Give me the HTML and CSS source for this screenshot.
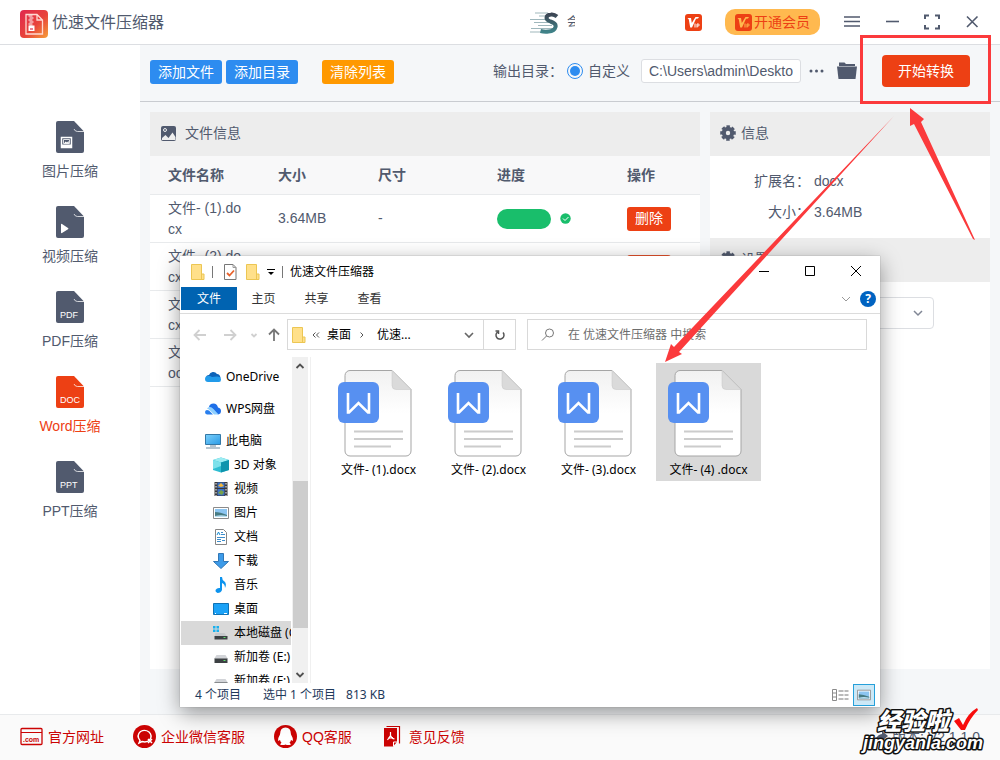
FILE: index.html
```html
<!DOCTYPE html>
<html lang="zh-CN">
<head>
<meta charset="utf-8">
<meta name="viewport" content="width=device-width, initial-scale=1">
<title>优速文件压缩器</title>
<link rel="stylesheet" href="styles.css">
</head>
<body>
<svg class="defs" width="0" height="0" aria-hidden="true">
  <defs>
    <linearGradient id="logo-bg" x1="0" y1="0" x2="1" y2="1"><stop offset="0" stop-color="#e0284f"/><stop offset=".55" stop-color="#e8433b"/><stop offset="1" stop-color="#f6a03a"/></linearGradient>
    <linearGradient id="paper" x1="0" y1="0" x2="0" y2="1"><stop offset="0" stop-color="#f1f1f1"/><stop offset=".5" stop-color="#fff"/></linearGradient>
    <linearGradient id="swoosh" x1="0" y1="0" x2="0" y2="1"><stop offset="0" stop-color="#3c4654"/><stop offset="1" stop-color="#3f8288"/></linearGradient>
    <linearGradient id="screen" x1="0" y1="0" x2="1" y2="1"><stop offset="0" stop-color="#7cd0fb"/><stop offset="1" stop-color="#2a9be6"/></linearGradient>
  </defs>
  <symbol id="vip" viewBox="0 0 17 17"><rect width="17" height="17" rx="3" fill="#ed4014"/><path d="M2.500 4H6l.8 5L10.500 3H14l-1 1.600-2 .2-4 8.700H5.200L3.800 5.400z" fill="currentColor"/><path d="M10 9.500v4M12 13.500v-3.500h1.200q1 0 1 1t-1 1H12" fill="none" stroke="currentColor" stroke-width="1"/></symbol>
  <symbol id="page" viewBox="0 0 28 32"><path d="M2 0h16l10 10.500V30a2 2 0 0 1-2 2H2a2 2 0 0 1-2-2V2a2 2 0 0 1 2-2z" fill="currentColor"/><path d="M18 8q1 2.500 3.500 2.500H28" fill="none" stroke="#fff" stroke-opacity=".75"/></symbol>
  <symbol id="gear" viewBox="0 0 16 16"><g fill="none" stroke="currentColor"><circle cx="8" cy="8" r="4.200" stroke-width="4"/><circle cx="8" cy="8" r="6.600" stroke-width="2.400" stroke-dasharray="3.400 1.784" transform="rotate(-15 8 8)"/></g></symbol>
  <symbol id="folder" viewBox="0 0 14 16"><path d="M.5.5h10v9.500h2.500v5.500H.5z" fill="#ffe08a" stroke="#ecc653"/><path d="M10.500 10v5.500" stroke="#ecc653"/></symbol>
  <symbol id="drive" viewBox="0 0 16 16"><path d="M3.500 6h9L15 10H1z" fill="#d2d4d8"/><path d="M1.500 9.500h13V14h-13z" fill="#3c4043"/><path d="M10.500 11.500h2" stroke="#5be36a"/></symbol>
  <symbol id="picture" viewBox="0 0 16 16"><path d="M.5 2.500h15v11H.5z" fill="#fff" stroke="#8b8b8b"/><path d="M2 4h12v8H2z" fill="#8cc5f1"/><path d="M2 7q5 0 12 3v2H2z" fill="#477b83"/><path d="M2 11q6-1.500 12 0v1H2z" fill="#b8dff2"/></symbol>
  <symbol id="wps-doc" viewBox="0 0 76 90">
    <path d="M12 1.500h42l19 19V82a5 5 0 0 1-5 5H12a5 5 0 0 1-5-5V6.500a5 5 0 0 1 5-5z" fill="url(#paper)" stroke="#a5a5a5"/>
    <path d="M54 1.500l19 19H58a4 4 0 0 1-4-4z" fill="#dadada" stroke="#c4c4c4" stroke-width=".5"/>
    <rect y="13" width="41" height="41" rx="6" fill="#5790f1"/>
    <path d="M10 24v19.500h1l9.500-9.500 9.500 9.500h1V24" fill="none" stroke="#fff" stroke-width="2.600"/>
    <path d="M16 62.500h49M16 70h49M16 77.500h37" stroke="#ccc" stroke-width="2"/>
  </symbol>
</svg>

<header class="topbar">
  <svg class="logo" viewBox="0 0 28 28" aria-hidden="true"><rect width="28" height="28" rx="4" fill="url(#logo-bg)"/><path d="M6 4.500h11l5.500 5.500v14H6zM17 4.500V10h5.500" fill="none" stroke="#ffd9d2" stroke-width="1.300"/><path d="M8.500 6h4m-3 2h4m-5 2h4m-3 2h4m-5 2h4m-3 2h3" stroke="#fff" stroke-width="1.200"/><path d="M8.500 15.500h6V21h-6z" fill="#fff"/><path d="M10 19h3" stroke="#e0304b" stroke-width="1.200"/></svg>
  <h1 class="app-title">优速文件压缩器</h1>
  <div class="account">
    <svg class="avatar" viewBox="0 0 30 24" aria-hidden="true"><path d="M5 3h13M9 6h9M0 9.500h17M4 12.500h15M8 15.500h14M1 18.500h22M0 22h21" stroke="#9fb7bc" stroke-width="1.200"/><path d="M27 6.500Q24 4 21 4.500q-4.500.5-4.500 3.500 0 2 4 3.500 6 2 5 5.500-1 4-7 4.500-4 .5-8-.5" fill="none" stroke="url(#swoosh)" stroke-width="4"/></svg>
    <span class="user-name">会</span>
  </div>
  <svg class="vip vip-badge" aria-hidden="true"><use href="#vip"/></svg>
  <button class="vip-button" type="button"><svg class="vip vip-amber" aria-hidden="true"><use href="#vip"/></svg>开通会员</button>
  <div class="window-tools">
    <button type="button" aria-label="菜单"><svg viewBox="0 0 16 16"><path d="M0 3h16M0 7.500h16M0 12h16"/></svg></button>
    <button type="button" aria-label="最小化"><svg viewBox="0 0 16 16"><path d="M2 7.500h13"/></svg></button>
    <button type="button" aria-label="全屏"><svg viewBox="0 0 16 16"><path d="M1 5V1.500h4M11 1.500h4V5M15 11v3.500h-4M5 14.500H1V11" stroke-width="2"/></svg></button>
    <button type="button" aria-label="关闭"><svg viewBox="0 0 16 16"><path d="M3 2.500L13.500 13M13.500 2.500L3 13"/></svg></button>
  </div>
</header>

<div class="workspace">
  <nav class="side">
    <button class="side-item" type="button"><span class="page-icon"><svg aria-hidden="true"><use href="#page"/><path d="M5.500 16.500h10v10h-10z" fill="#515a6e" stroke="#fff" stroke-width="1.500"/><path d="M6 23.500h9v3H6z" fill="#fff"/><path d="M7.500 18.500h6v4h-6z" fill="none" stroke="#fff" stroke-width=".8"/><path d="M8 22.500l1.500-2 1.500 1 1.500-1.500.5 2.500z" fill="#fff"/></svg></span>图片压缩</button>
    <button class="side-item" type="button"><span class="page-icon"><svg aria-hidden="true"><use href="#page"/><path d="M5 18.500q0-1 1-.5l6 4q1 .7 0 1.200l-6 3.800q-1 .5-1-.5z" fill="#fff"/></svg></span>视频压缩</button>
    <button class="side-item" type="button"><span class="page-icon"><svg aria-hidden="true"><use href="#page"/><text x="4" y="27">PDF</text></svg></span>PDF压缩</button>
    <button class="side-item active" type="button"><span class="page-icon"><svg aria-hidden="true"><use href="#page"/><text x="4" y="27">DOC</text></svg></span>Word压缩</button>
    <button class="side-item" type="button"><span class="page-icon"><svg aria-hidden="true"><use href="#page"/><text x="4" y="27">PPT</text></svg></span>PPT压缩</button>
  </nav>

  <main class="content">
    <div class="toolbar">
      <div class="file-buttons">
        <button class="btn blue" type="button">添加文件</button>
        <button class="btn blue" type="button">添加目录</button>
        <button class="btn orange" type="button">清除列表</button>
      </div>
      <div class="output">
        <span class="output-label">输出目录：</span>
        <input class="radio" type="radio" id="custom" name="dir" checked>
        <label class="radio-label" for="custom">自定义</label>
        <input class="path" type="text" value="C:\Users\admin\Deskto" aria-label="输出目录路径">
        <button class="icon-btn more" type="button" aria-label="浏览"><svg viewBox="0 0 15 20"><circle cx="2" cy="10" r="1.500"/><circle cx="7.500" cy="10" r="1.500"/><circle cx="13" cy="10" r="1.500"/></svg></button>
        <button class="icon-btn open" type="button" aria-label="打开目录"><svg viewBox="0 0 20 20"><path d="M2 1.500h5.500L9 3h9v2H2z"/><path d="M0 5.500h20l-1.500 12.500h-17z"/></svg></button>
        <button class="convert" type="button">开始转换</button>
      </div>
    </div>

    <div class="panels">
      <section class="panel files">
        <h2 class="panel-title wide"><svg viewBox="0 0 16 16" aria-hidden="true"><rect y="1" width="15" height="15" rx="2" fill="currentColor"/><circle cx="4" cy="5" r="1.500" fill="none" stroke="#eee"/><path d="M1 15v-2l3.500-3 3 3 4-5.500 3 4.500v3z" fill="#eee"/></svg>文件信息</h2>
        <table class="file-table">
          <thead><tr><th class="c-name">文件名称</th><th class="c-size">大小</th><th class="c-dim">尺寸</th><th class="c-progress">进度</th><th>操作</th></tr></thead>
          <tbody>
            <tr><td>文件- (1).docx</td><td>3.64MB</td><td>-</td><td><div class="progress"><span class="bar"></span><svg viewBox="0 0 11 11" aria-hidden="true"><circle cx="5.500" cy="5.500" r="5.200" fill="#19be6b"/><path d="M3 5.500l2 2 3.500-3.500" fill="none" stroke="#fff"/></svg></div></td><td><button class="btn red" type="button">删除</button></td></tr>
            <tr><td>文件- (2).docx</td><td></td><td></td><td></td><td><button class="btn red" type="button">删除</button></td></tr>
            <tr><td>文件- (3).docx</td><td></td><td></td><td></td><td></td></tr>
            <tr><td>文件- (4) .docx</td><td></td><td></td><td></td><td></td></tr>
          </tbody>
        </table>
      </section>
      <section class="panel details">
        <h2 class="panel-title"><svg aria-hidden="true"><use href="#gear"/></svg>信息</h2>
        <dl class="facts"><dt>扩展名：</dt><dd>docx</dd><dt>大小：</dt><dd>3.64MB</dd></dl>
        <h2 class="panel-title"><svg aria-hidden="true"><use href="#gear"/></svg>设置</h2>
        <div class="setting">
          <select class="mode" aria-label="压缩设置"><option></option></select>
          <svg viewBox="0 0 10 10" aria-hidden="true"><path d="M1 3l4 4 4-4"/></svg>
        </div>
      </section>
    </div>
  </main>
</div>

<footer class="footer">
  <a href="#"><svg viewBox="0 0 23 23" aria-hidden="true"><rect x="1" y="3.500" width="21" height="16" rx="1" fill="none" stroke="currentColor" stroke-width="1.300"/><path d="M1 7.500h21" stroke="currentColor"/><text class="dotcom" x="3" y="17">.com</text></svg>官方网址</a>
  <a href="#"><svg viewBox="0 0 23 23" aria-hidden="true"><circle cx="11.500" cy="11.500" r="11.500" fill="currentColor"/><path d="M7 15.500l-1 2.500 3-1.500q5 1.500 8-2 2.500-4-1-7.500-4-3-8.500-.5-4.500 4-.5 9z" fill="none" stroke="#fff" stroke-width="1.400"/><path d="M15 14l4 4M19 14l-4 4" stroke="#fff" stroke-width="1.500"/></svg>企业微信客服</a>
  <a href="#"><svg viewBox="0 0 23 23" aria-hidden="true"><circle cx="11.500" cy="11.500" r="11.500" fill="currentColor"/><path d="M11.500 2.500q5.500 0 5.500 7 2 3 2 6.500l-2-1q-.5 2-1.500 2.500l1.500 2q-3 1-5.500 0-2.500 1-5.500 0l1.500-2Q6.500 17 6 15l-2 1q0-3.500 2-6.500 0-7 5.500-7z" fill="#fff"/></svg>QQ客服</a>
  <a href="#"><svg viewBox="0 0 23 23" aria-hidden="true"><path d="M3 3h13v14l-4 4.500H3z" fill="currentColor"/><path d="M5.500 1.500h13v17" fill="none" stroke="currentColor" stroke-width="1.200"/><path d="M9.500 7v3.500l-3 4.500M9.500 10.500q1 3 4 3.500M7 13.500l5-1" fill="none" stroke="#fff" stroke-width="1.200"/><path d="M12.500 21v-4H16" fill="none" stroke="#fff"/></svg>意见反馈</a>
  <span class="version"><svg viewBox="0 0 14 14" aria-hidden="true"><path d="M0 10q3-6 7-6V1l6 5-6 5V8Q3 8 0 10z"/></svg>版本: V2.1.1.0</span>
</footer>

<section class="explorer" aria-label="优速文件压缩器">
  <div class="ex-title">
    <svg class="fold" aria-hidden="true"><use href="#folder"/></svg><i class="sep"></i>
    <svg class="check" viewBox="0 0 13 16" aria-hidden="true"><path d="M.5.500h8.500l3 3v12H.5z" fill="#fff" stroke="#777"/><path d="M9 .5v3h3" fill="none" stroke="#999"/><path d="M3 9l2.500 2.500 4.500-5" fill="none" stroke="#e8622c" stroke-width="1.800"/></svg>
    <svg class="fold" aria-hidden="true"><use href="#folder"/></svg>
    <svg class="caret" viewBox="0 0 8 8" aria-hidden="true"><path d="M0 1.500h8"/><path d="M1 4h6L4 7z" fill="#000" stroke="none"/></svg><i class="sep"></i>
    <span class="ex-name">优速文件压缩器</span>
    <div class="ex-controls">
      <button type="button" aria-label="最小化窗口"><svg viewBox="0 0 12 12"><path d="M1 6.500h10"/></svg></button>
      <button type="button" aria-label="最大化窗口"><svg viewBox="0 0 12 12"><path d="M1.500 1.500h9v9h-9z"/></svg></button>
      <button type="button" aria-label="关闭窗口"><svg viewBox="0 0 12 12"><path d="M1 1l10 10M11 1L1 11"/></svg></button>
    </div>
  </div>
  <div class="ex-tabs">
    <button class="tab current" type="button">文件</button><button class="tab" type="button">主页</button><button class="tab" type="button">共享</button><button class="tab" type="button">查看</button>
    <svg class="ribbon-toggle" viewBox="0 0 10 10" aria-hidden="true"><path d="M1 3l4 4 4-4"/></svg>
    <button class="help" type="button" aria-label="帮助">?</button>
  </div>
  <div class="ex-address">
    <div class="history">
      <svg class="faint" viewBox="0 0 14 14" aria-hidden="true"><path d="M13 7H1.500M6.500 2l-5 5 5 5"/></svg>
      <svg class="faint" viewBox="0 0 14 14" aria-hidden="true"><path d="M1 7h11.500M7.500 2l5 5-5 5"/></svg>
      <svg class="faint small" viewBox="0 0 8 8" aria-hidden="true"><path d="M1.500 3L4 5.500 6.500 3"/></svg>
      <svg class="up" viewBox="0 0 14 14" aria-hidden="true"><path d="M7 13V2M2 6.500l5-5 5 5"/></svg>
    </div>
    <div class="crumbs">
      <svg class="fold" aria-hidden="true"><use href="#folder"/></svg>
      <svg class="back" viewBox="0 0 8 8" aria-hidden="true"><path d="M3.500 1.500L1 4l2.500 2.500M7 1.500L4.500 4 7 6.500"/></svg><span>桌面</span><svg class="next" viewBox="0 0 8 8" aria-hidden="true"><path d="M2.500 1.500L5 4 2.500 6.500"/></svg><span>优速...</span>
      <svg class="drop" viewBox="0 0 10 10" aria-hidden="true"><path d="M1 3l4 4 4-4"/></svg>
      <button class="refresh" type="button" aria-label="刷新"><svg viewBox="0 0 12 12"><path d="M9 3.500a4 4 0 1 1-5.500-.5M1.500 2h3v3" /></svg></button>
    </div>
    <div class="search">
      <svg viewBox="0 0 14 14" aria-hidden="true"><circle cx="8.500" cy="5" r="4"/><path d="M5.500 8L1 12.500"/></svg>
      <input type="text" placeholder="在 优速文件压缩器 中搜索" aria-label="搜索">
    </div>
  </div>
  <div class="ex-body">
    <ul class="tree">
      <li class="root"><svg viewBox="0 0 16 16" aria-hidden="true"><path d="M4 6a4.500 4.500 0 0 1 8-1q3 0 3.500 4L8 11 1 9q0-3 3-3z" fill="#0d63b8"/><path d="M3 13a3 3 0 0 1 0-6q2-.5 4 1l5-.5q4 0 4 3 0 2.500-2 2.500z" fill="#229bea"/></svg>OneDrive</li>
      <li class="root"><svg viewBox="0 0 16 16" aria-hidden="true"><path d="M4 6q.5-3.500 4.500-3.500 3.500 0 4.500 4 3 .5 3 3.500t-3 3.500z" fill="#1e6fe8"/><path d="M2 7.500Q5 4.500 8.500 8l5 5.500H9L5 9.500Q3.500 8 2 7.500z" fill="#8fd0ff"/><path d="M0 11q.5-3 4-1.500L8 13.500H2Q0 13 0 11z" fill="#297fee"/></svg>WPS网盘</li>
      <li class="root"><svg viewBox="0 0 16 16" aria-hidden="true"><path d="M.5 1.500h15v10H.5z" fill="url(#screen)" stroke="#3478a6"/><path d="M5 13h6M1 15h14" stroke="#6c8ba0"/></svg>此电脑</li>
      <li><svg viewBox="0 0 16 16" aria-hidden="true"><path d="M0 3l8-2.500L16 3v10l-8 2.500L0 13z" fill="#2ebdd2"/><path d="M0 3l8-2.500L16 3 8 5.500z" fill="#9cecf2"/><path d="M8 5.500L16 3v10l-8 2.500z" fill="#0f94ad"/><path d="M0 3l8 2.500V9l-8 3z" fill="#7de1eb"/></svg>3D 对象</li>
      <li><svg viewBox="0 0 16 16" aria-hidden="true"><path d="M1.500 1h13v14h-13z" fill="#39383a"/><path d="M4.500 1.500h7V7h-7zM4.500 8h7v6.500h-7z" fill="#3d72c8"/><path d="M5 5l3-3 3 3-3 1z" fill="#f3b73b"/><path d="M5 12l3-3 3 2-2 3z" fill="#77a24a"/><path d="M3 2v13M13 2v13" stroke="#fff" stroke-dasharray="1.500 1.500"/></svg>视频</li>
      <li><svg aria-hidden="true"><use href="#picture"/></svg>图片</li>
      <li><svg viewBox="0 0 16 16" aria-hidden="true"><path d="M2.500.5h8l3 3v12h-11z" fill="#fff" stroke="#858585"/><path d="M8 3.500h2M8 5.500h4M4 8.500h8M4 10.500h4M4 12.500h4M9 11.500h3" stroke="#3d8dcb"/><path d="M4 6l1.500-3L7 6" fill="none" stroke="#168bd2"/></svg>文档</li>
      <li><svg viewBox="0 0 16 16" aria-hidden="true"><path d="M5.500.5h5v8h5L8 15.500.5 8.500h5z" fill="#3d9be9" stroke="#3177b6"/></svg>下载</li>
      <li><svg viewBox="0 0 16 16" aria-hidden="true"><path d="M7 0h2q0 3 2.500 4.500Q14 7 12 11q0-4-3-5v7q-1 3-4.500 3Q2 15 2.500 13 4 10.500 7 11z" fill="#0c93ee"/></svg>音乐</li>
      <li><svg viewBox="0 0 16 16" aria-hidden="true"><path d="M.5 2.500h15v11H.5z" fill="#1ba2f7" stroke="#0f72b5"/><path d="M2 12.500h1M11 12.500h3" stroke="#fff"/></svg>桌面</li>
      <li class="chosen"><svg viewBox="0 0 16 16" aria-hidden="true"><path d="M2.500 8h9l3 4h-13z" fill="#c6c8cb"/><path d="M1.500 11h13v3.500h-13z" fill="#3c4043"/><path d="M10.500 12.500h2" stroke="#5be36a"/><path d="M0 1h2.500v2.500H0zM3.500 1H6v2.500H3.500zM0 4.500h2.500V7H0zM3.500 4.500H6V7H3.500z" fill="#1ab0ed"/></svg>本地磁盘 (C:)</li>
      <li><svg aria-hidden="true"><use href="#drive"/></svg>新加卷 (E:)</li>
      <li><svg aria-hidden="true"><use href="#drive"/></svg>新加卷 (F:)</li>
    </ul>
    <div class="scroll" aria-hidden="true">
      <svg viewBox="0 0 10 10"><path d="M1.500 7L5 3.500 8.500 7"/></svg><span class="thumb"></span><svg viewBox="0 0 10 10"><path d="M1.500 3L5 6.500 8.500 3"/></svg>
    </div>
    <div class="grid">
      <figure class="doc"><svg aria-hidden="true"><use href="#wps-doc"/></svg><figcaption>文件- (1).docx</figcaption></figure>
      <figure class="doc"><svg aria-hidden="true"><use href="#wps-doc"/></svg><figcaption>文件- (2).docx</figcaption></figure>
      <figure class="doc"><svg aria-hidden="true"><use href="#wps-doc"/></svg><figcaption>文件- (3).docx</figcaption></figure>
      <figure class="doc selected"><svg aria-hidden="true"><use href="#wps-doc"/></svg><figcaption>文件- (4) .docx</figcaption></figure>
    </div>
  </div>
  <div class="ex-status">
    <span>4 个项目</span><span>选中 1 个项目</span><span>813 KB</span>
    <div class="views">
      <button type="button" aria-label="详细信息"><svg viewBox="0 0 18 14"><path d="M.5 1.500h4v11h-4zM.5 5h4M.5 9h4" fill="none" stroke="#8a8a8a"/><path d="M6.500 3h5M12.500 3h4M6.500 7h5M12.500 7h4M6.500 11h5M12.500 11h4" stroke="#777"/></svg></button>
      <button class="on" type="button" aria-label="大图标"><svg viewBox="0 0 16 16"><use href="#picture"/></svg></button>
    </div>
  </div>
</section>

<svg class="marks" viewBox="0 0 1000 760" aria-hidden="true">
  <path d="M861.500 36.500h128v66h-128z" fill="none" stroke="#fb3a3c" stroke-width="3"/>
  <path d="M910 108l14 11-3 3 54 118-2-1-59-115-4 2z" fill="#fb3a3c"/>
  <path d="M894 116L674 347l-3-3-6 18 17-8-3-2z" fill="#fb3a3c"/>
</svg>
<svg class="watermark" viewBox="0 0 130 54" role="img" aria-label="经验啦 jingyanla.com">
  <text class="wm-cn" x="19" y="24">经验啦</text>
  <text class="wm-url" x="5" y="43">jingyanla.com</text>
  <path d="M96 15l5-3 4 7q5-12 14-17l1 2q-8 8-13 20h-4z" fill="#f80c0c"/>
</svg>
</body>
</html>
```

FILE: styles.css
```css
* { box-sizing: border-box; }
body {
  margin: 0;
  min-height: 100vh;
  display: flex;
  flex-direction: column;
  position: relative;
  background: #fff;
  color: #515a6e;
  font: 14px/20px "Liberation Sans", "Noto Sans CJK SC", sans-serif;
}
button, input, select { font: inherit; color: inherit; margin: 0; }
button { border: 0; padding: 0; background: none; }
svg { display: block; flex: none; }
h1, h2, dl, dd, ul, figure { margin: 0; padding: 0; font-weight: 400; }
.defs { position: absolute; }

/* Top bar */
.topbar { display: flex; align-items: center; height: 45px; padding: 0 20px; border-bottom: 1px solid #dcdee2; }
.logo { width: 28px; height: 28px; margin-top: 4px; }
.app-title { margin-left: 4px; padding-top: 2px; font-size: 16px; }
.account { display: flex; align-items: center; gap: 7px; margin-left: auto; font-size: 12px; }
.avatar { width: 30px; height: 24px; }
.user-name { width: 8px; overflow: hidden; white-space: nowrap; }
.vip { width: 17px; height: 17px; color: #fff; }
.vip-badge { margin-left: 110px; }
.vip-button { display: flex; align-items: center; gap: 2px; height: 26px; margin-left: 23px; padding: 0 10px; border-radius: 10px; background: #ffb94f; color: #ed4014; white-space: nowrap; }
.vip-amber { color: #ffb94f; }
.window-tools { display: flex; gap: 24px; margin-left: 24px; }
.window-tools svg { width: 16px; height: 16px; fill: none; stroke: #515a6e; stroke-width: 1.600; }

/* Side menu */
.workspace { flex: 1; display: flex; }
.side { width: 140px; flex: none; display: flex; flex-direction: column; align-items: center; gap: 25px; padding-top: 76px; }
.side-item { display: flex; flex-direction: column; align-items: center; gap: 8px; }
.page-icon svg { width: 28px; height: 32px; color: #515a6e; }
.page-icon text { font: 9px "Liberation Sans", sans-serif; fill: #fff; }
.active, .active .page-icon svg { color: #ed4014; }

/* Toolbar */
.content { flex: 1; min-width: 0; display: flex; flex-direction: column; background: #f5f7f9; }
.toolbar { display: flex; align-items: center; justify-content: space-between; height: 57px; padding: 0 30px 4px 10px; border-bottom: 1px solid #c9ccd1; }
.file-buttons, .output { display: flex; align-items: center; }
.file-buttons { gap: 4px; padding-top: 2px; }
.btn { height: 24px; padding: 0 8px; border-radius: 3px; color: #fff; white-space: nowrap; }
.blue { background: #2d8cf0; }
.orange { margin-left: 20px; background: #ff9900; }
.red { background: #ed4014; }
.output-label { white-space: nowrap; }
.radio { appearance: none; width: 16px; height: 16px; margin-left: 4px; border: 1px solid #2d8cf0; border-radius: 50%; background: #2d8cf0; background-clip: content-box; padding: 2px; }
.radio-label { margin: 0 11px 0 5px; white-space: nowrap; }
.path { width: 160px; height: 24px; padding: 0 7px; border: 1px solid #dcdee2; border-radius: 3px; background: #fff; }
.icon-btn svg { height: 20px; fill: #515a6e; }
.more { margin-left: 8px; }
.more svg { width: 15px; }
.open { margin: 0 25px 0 13px; }
.open svg { width: 20px; }
.convert { height: 32px; padding: 0 16px; border-radius: 4px; background: #ed4014; color: #fff; white-space: nowrap; }

/* Panels */
.panels { flex: 1; display: flex; gap: 10px; padding: 10px 10px 45px; }
.panel { background: #fff; }
.files { flex: 1; min-width: 0; }
.details { width: 280px; flex: none; }
.panel-title { display: flex; align-items: center; gap: 5px; height: 44px; padding: 0 10px 2px; background: #ededed; font-size: 14px; line-height: 20px; }
.panel-title.wide { gap: 8px; padding-left: 11px; }
.panel-title svg { width: 16px; height: 16px; }
.file-table { width: 100%; table-layout: fixed; border-collapse: separate; border-spacing: 0; line-height: 21px; }
.file-table th, .file-table td { padding: 2px 18px; border-bottom: 1px solid #e8eaec; text-align: left; overflow-wrap: anywhere; word-break: break-all; }
.file-table th { height: 39px; background: #f8f8f9; font-weight: 700; }
.file-table td { height: 48px; }
.c-name { width: 110px; }
.c-size { width: 100px; }
.c-dim { width: 119px; }
.c-progress { width: 130px; }
.progress { display: flex; align-items: center; gap: 9px; }
.progress svg { width: 11px; height: 11px; }
.bar { width: 54px; height: 20px; border-radius: 10px; background: #19be6b; }
.facts { display: grid; grid-template-columns: 100px 1fr; gap: 11px 4px; padding: 15px 0 16px; }
.facts dt { text-align: right; white-space: nowrap; }
.setting { display: grid; justify-content: end; align-items: center; padding: 15px 56px 0 0; }
.mode { grid-area: 1 / 1; appearance: none; width: 120px; height: 32px; border: 1px solid #dcdee2; border-radius: 4px; background: #fff; }
.setting svg { grid-area: 1 / 1; justify-self: end; margin-right: 11px; width: 10px; height: 10px; fill: none; stroke: #808695; stroke-width: 1.500; pointer-events: none; }

/* Footer */
.footer { display: flex; align-items: center; gap: 29px; height: 46px; padding: 0 20px 2px; border-top: 1px solid #e8eaec; background: #fafafa; }
.footer a { display: flex; align-items: center; gap: 5px; color: #cb0303; text-decoration: none; white-space: nowrap; }
.footer a svg { width: 23px; height: 23px; }
.dotcom { font: bold 7px "Liberation Sans", sans-serif; fill: currentColor; }
.version { display: flex; align-items: center; gap: 3px; margin-left: auto; white-space: nowrap; }
.version svg { width: 14px; height: 14px; fill: #515a6e; }

/* Explorer window floating over the app */
.explorer {
  position: absolute; left: 180px; right: 120px; top: 256px; bottom: 53px;
  display: flex; flex-direction: column;
  background: #fff; color: #000;
  box-shadow: 0 0 1px #888, 0 6px 20px rgba(0, 0, 0, .4);
  font: 12px/20px "Noto Sans", "Noto Sans CJK SC", sans-serif;
}
.ex-title { display: flex; align-items: center; height: 31px; padding-left: 11px; }
.fold { width: 14px; height: 16px; }
.sep { width: 1px; height: 12px; margin: 0 7px; background: #777; }
.check { width: 13px; height: 16px; margin: 0 9px 0 4px; }
.caret { width: 8px; height: 8px; margin-left: 7px; fill: none; stroke: #000; }
.ex-name { white-space: nowrap; }
.ex-controls { display: flex; margin: 0 1px 2px auto; }
.ex-controls button { display: grid; place-items: center; width: 46px; height: 29px; }
.ex-controls svg { width: 12px; height: 12px; fill: none; stroke: #000; }
.ex-tabs { display: flex; align-items: center; height: 27px; padding: 0 4px 3px 1px; border-bottom: 1px solid #dcdcdc; }
.tab { width: 53px; height: 23px; color: #333; }
.current { width: 56px; background: #0063b1; color: #fff; }
.ribbon-toggle { width: 10px; height: 10px; margin-left: auto; fill: none; stroke: #999; }
.help { width: 16px; height: 16px; margin-left: 9px; border-radius: 50%; background: #0063c1; color: #fff; font-weight: 700; line-height: 16px; }
.ex-address { display: flex; gap: 11px; padding: 5px 13px 0; }
.history { display: flex; align-items: center; width: 94px; margin-right: -11px; gap: 16px; }
.history svg { width: 14px; height: 14px; fill: none; stroke: #777; stroke-width: 1.800; }
.history .faint { stroke: #d0d0d0; }
.history .small { width: 8px; height: 8px; margin: 0 -7px 0 -3px; }
.crumbs { display: flex; align-items: center; width: 229px; height: 31px; padding-left: 4px; border: 1px solid #d9d9d9; white-space: nowrap; }
.back, .next { width: 8px; height: 8px; fill: none; stroke: #555; }
.back { margin: 0 7px 0 6px; }
.next { margin: 0 11px 0 7px; }
.drop { width: 10px; height: 10px; margin: 0 9px 0 auto; fill: none; stroke: #666; stroke-width: 1.600; }
.refresh { display: grid; place-items: center; width: 32px; height: 29px; border-left: 1px solid #d9d9d9; }
.refresh svg { width: 12px; height: 12px; fill: none; stroke: #555; stroke-width: 1.500; }
.search { flex: 1; display: flex; align-items: center; gap: 13px; height: 31px; padding-left: 13px; border: 1px solid #d9d9d9; }
.search svg { width: 14px; height: 14px; fill: none; stroke: #777; }
.search input { flex: 1; min-width: 0; height: 24px; padding: 0; border: 0; background: none; }
.search input::placeholder { color: #6d6d6d; opacity: 1; }
.ex-body { flex: 1; min-height: 0; display: flex; margin-top: 7px; }
.tree { width: 111px; flex: none; overflow: hidden; padding: 8px 0 0 1px; list-style: none; }
.tree li { display: flex; align-items: center; gap: 5px; height: 24px; padding-left: 32px; white-space: nowrap; }
.tree .root { padding-left: 24px; margin-bottom: 8px; }
.tree .root:nth-child(3) { margin-bottom: 0; }
.tree svg { width: 16px; height: 16px; }
.chosen { background: #d9d9d9; }
.scroll { display: flex; flex-direction: column; align-items: center; width: 16px; margin-left: 1px; padding: 4px 0 3px; background: #f0f0f0; }
.scroll svg { width: 10px; height: 10px; fill: none; stroke: #505050; stroke-width: 1.800; }
.thumb { width: 15px; height: 46%; margin: auto 0 42px; background: #cdcdcd; }
.grid { flex: 1; display: flex; flex-wrap: wrap; align-content: flex-start; gap: 5px; margin-left: 2px; padding: 6px 0 0 15px; border-left: 1px solid #f0f0f0; }
.doc { display: flex; flex-direction: column; align-items: center; width: 105px; height: 118px; padding-top: 6px; }
.doc svg { width: 76px; height: 90px; margin: 0 6px 1px 0; }
.doc figcaption { white-space: nowrap; }
.selected { background: #d9d9d9; }
.ex-status { display: flex; align-items: center; height: 24px; padding: 0 5px 0 15px; color: #1e395b; white-space: nowrap; }
.ex-status span:nth-child(2) { margin: 0 10px 0 22px; }
.views { display: flex; align-items: center; gap: 1px; margin-left: auto; }
.views button { display: grid; place-items: center; width: 22px; height: 22px; }
.views svg { width: 18px; height: 14px; }
.views .on { border: 1px solid #26a0da; background: #cce8f6; }

/* Annotations over everything */
.marks { position: absolute; left: 0; top: 0; width: 1000px; height: 760px; pointer-events: none; }
.watermark { position: absolute; right: 12px; bottom: 0; width: 130px; height: 54px; pointer-events: none; }
.watermark text { fill: #fff; stroke: #111; stroke-width: 3; paint-order: stroke; stroke-linejoin: round; }
.wm-cn { font: italic 900 24px "Noto Sans CJK SC", sans-serif; }
.wm-url { font: italic bold 18px "Liberation Sans", sans-serif; }
```
